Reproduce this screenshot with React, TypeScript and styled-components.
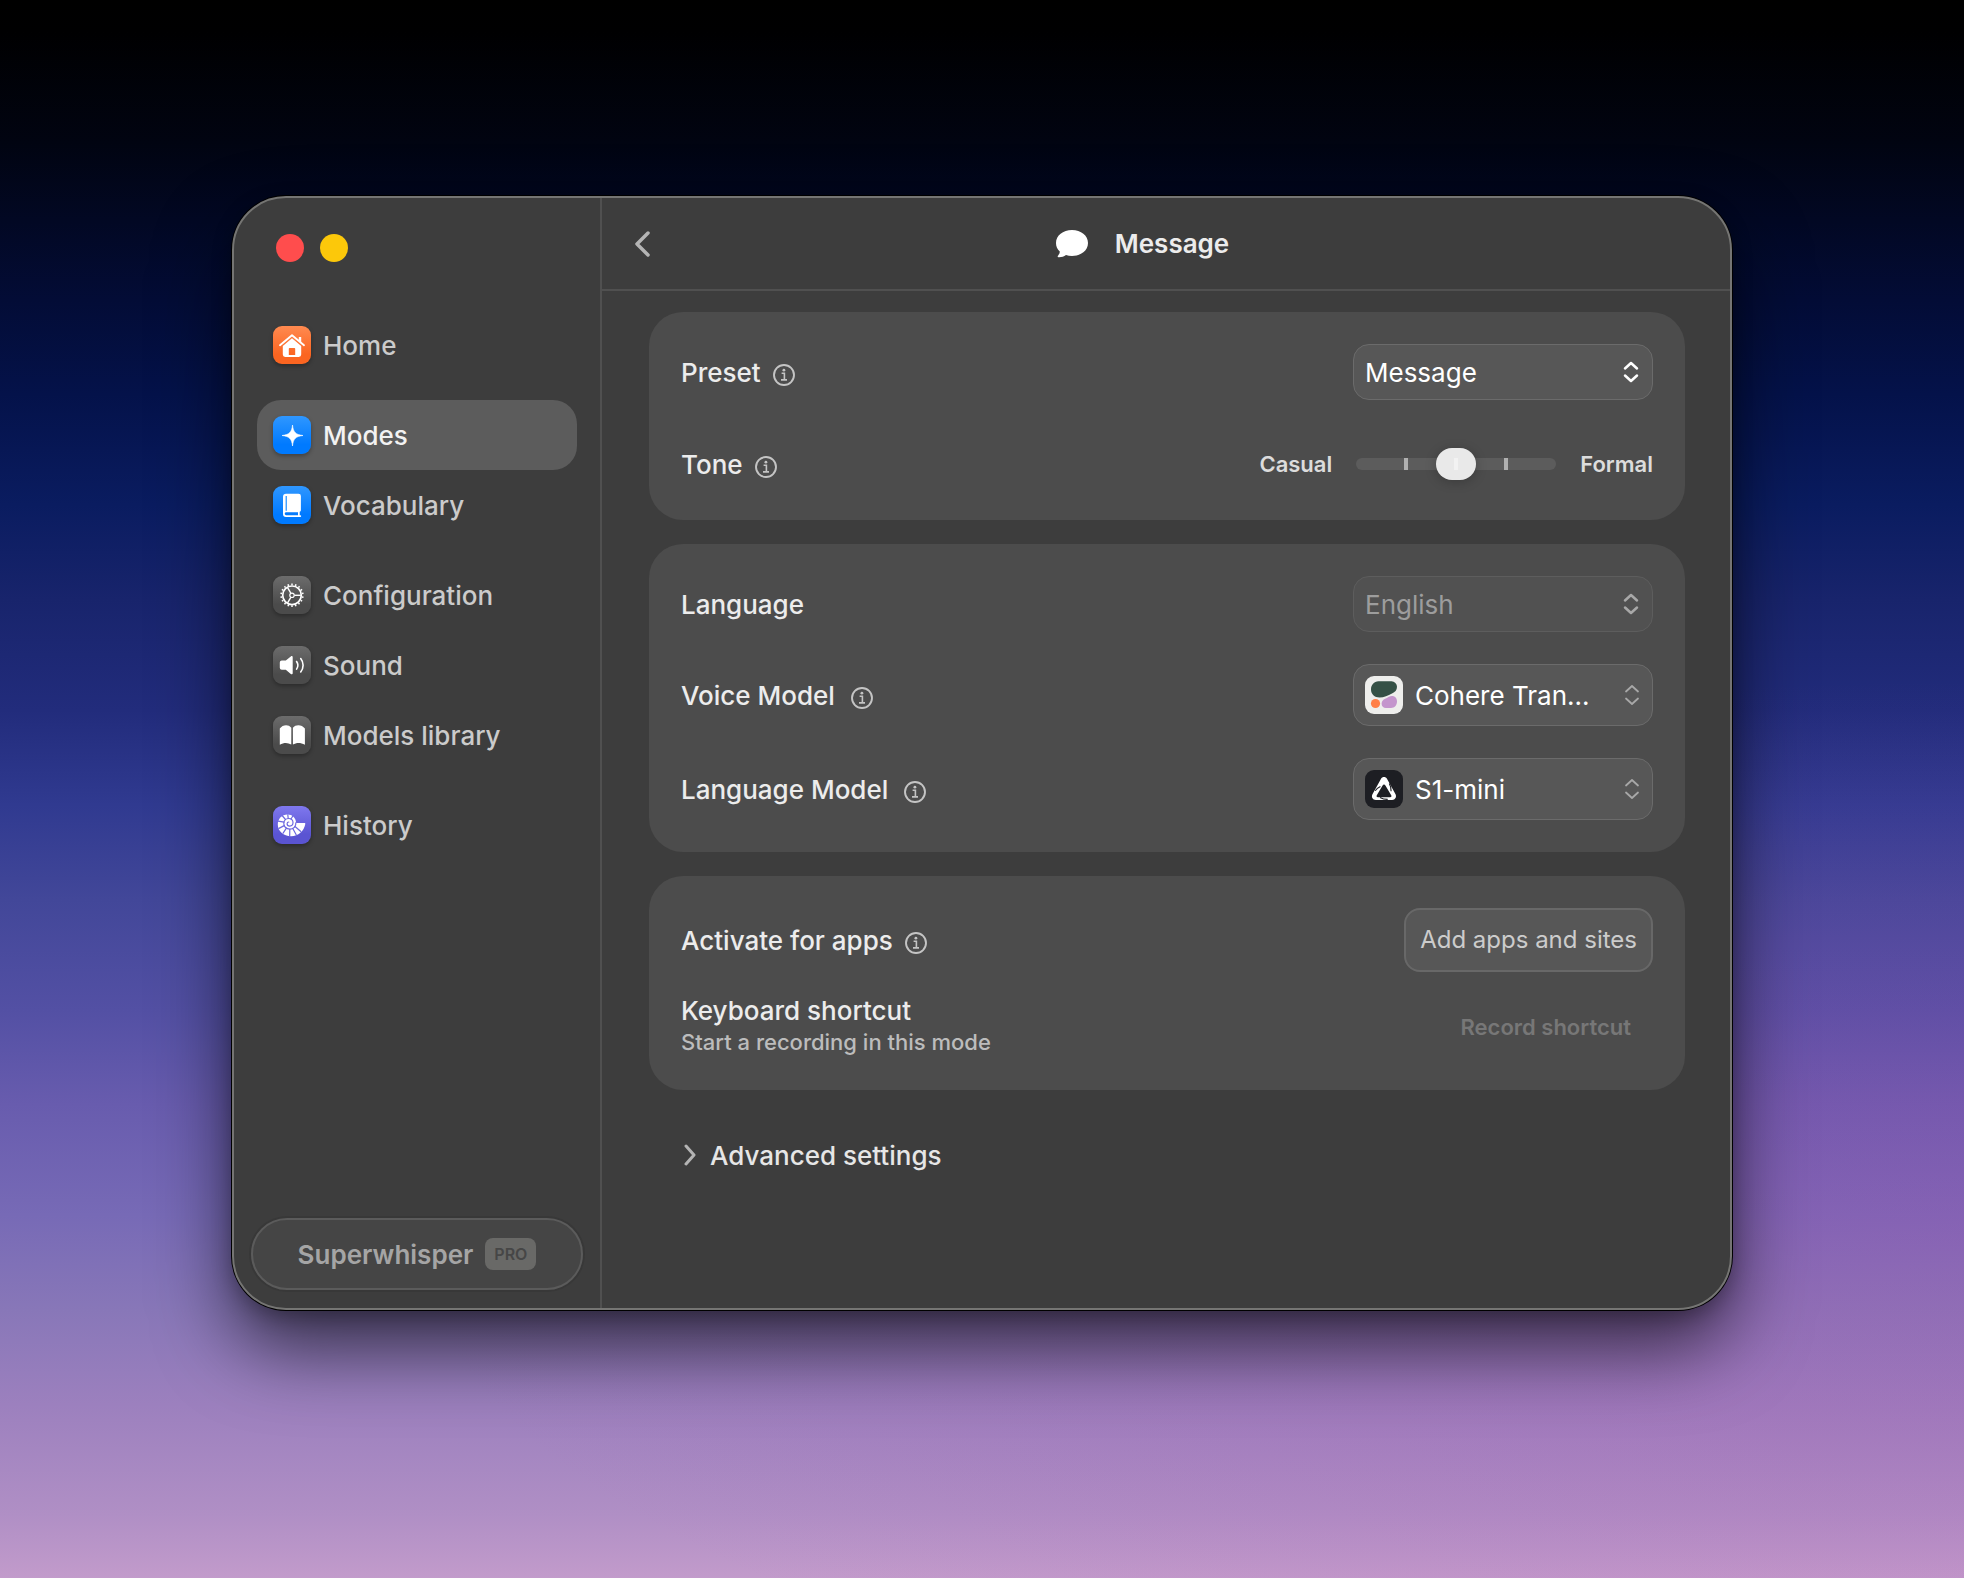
import React from "react";
import styled, { createGlobalStyle } from "styled-components";

const Global = createGlobalStyle`
  *, *::before, *::after { box-sizing: border-box; }
  body { margin: 0; background: #000; }
  button, select, input { font: inherit; color: inherit; margin: 0; }
`;

const sans = `Inter, "Liberation Sans", sans-serif`;

const Desktop = styled.div`
  min-height: 100vh;
  display: grid;
  grid-template-columns: minmax(0, 1500px);
  justify-content: center;
  align-items: start;
  padding: 196px 40px 0;
  font-family: ${sans};
  font-size: 26px;
  line-height: 32px;
  color: #ececec;
  background:
    radial-gradient(ellipse 80% 35% at 100% 78%, rgba(175, 74, 174, 0.25), rgba(175, 74, 174, 0)),
    linear-gradient(
      #000000 0%,
      #000001 2%,
      #010411 9%,
      #030c36 19%,
      #04124a 25%,
      #0a1c60 32%,
      #18246c 38%,
      #222c7c 45%,
      #303a90 51%,
      #424799 57%,
      #5350a4 64%,
      #685cae 70%,
      #776ab6 77%,
      #8877b8 83%,
      #9c80be 89%,
      #b08fc5 96%,
      #c29bcb 100%
    );
`;

const Window = styled.main`
  display: grid;
  grid-template-columns: 368px minmax(0, 1fr);
  min-height: 1114px;
  border: 2px solid #757573;
  border-radius: 54px;
  background: #3d3d3d;
  box-shadow: 0 0 0 1px #000, 0 38px 76px rgba(0, 0, 0, 0.62), 0 6px 20px rgba(0, 0, 0, 0.25);
`;

const Sidebar = styled.aside`
  display: flex;
  flex-direction: column;
  padding: 36px 17px 18px;
  border-right: 2px solid #505050;
`;

const Lights = styled.div`
  display: flex;
  gap: 16px;
  padding: 0 25px;
  margin-bottom: 48px;
`;

const Light = styled.button<{ $color: string }>`
  width: 28px;
  height: 28px;
  padding: 0;
  border: 0;
  border-radius: 50%;
  background: ${(p) => p.$color};
`;

const Nav = styled.nav`
  display: flex;
  flex-direction: column;
  gap: 20px;
  padding: 0 6px;
`;

const NavGroup = styled.div`
  display: flex;
  flex-direction: column;
`;

const NavItem = styled.a<{ $active?: boolean }>`
  display: flex;
  align-items: center;
  gap: 12px;
  height: 70px;
  padding: 0 16px;
  border-radius: 24px;
  text-decoration: none;
  font-weight: 500;
  color: ${(p) => (p.$active ? "#f2f2f2" : "#cbcbcb")};
  background: ${(p) => (p.$active ? "#5c5c5c" : "transparent")};
`;

const Caption = styled.span`
  padding-top: 2px;
`;

const Tile = styled.span<{ $from: string; $to: string }>`
  display: grid;
  place-items: center;
  width: 38px;
  height: 38px;
  border-radius: 9px;
  background: linear-gradient(${(p) => p.$from}, ${(p) => p.$to} 75%);
  box-shadow: 0 2px 4px rgba(0, 0, 0, 0.3);
`;

const Account = styled.button`
  display: flex;
  align-items: center;
  justify-content: center;
  gap: 12px;
  height: 72px;
  margin-top: auto;
  padding: 0 16px;
  border: 2px solid #5b5b5b;
  border-radius: 36px;
  background: #454545;
  box-shadow: 0 0 0 2px #383838;
  font-weight: 600;
  color: #a5a5a5;
`;

const Badge = styled.span`
  padding: 0 9px;
  border-radius: 8px;
  background: #696967;
  color: #464646;
  font-size: 16px;
  font-weight: 600;
  line-height: 32px;
`;

const Pane = styled.section`
  display: flex;
  flex-direction: column;
  min-width: 0;
`;

const Header = styled.header`
  display: grid;
  grid-template-columns: 48px minmax(0, 1fr) 96px;
  align-items: center;
  height: 93px;
  border-bottom: 2px solid #505050;
`;

const IconButton = styled.button`
  display: flex;
  justify-content: flex-end;
  padding: 0;
  border: 0;
  background: none;
`;

const Title = styled.h1`
  display: flex;
  align-items: center;
  justify-content: center;
  gap: 26px;
  margin: 0;
  font-size: 26px;
  font-weight: 600;
`;

const Content = styled.div`
  display: flex;
  flex-direction: column;
  gap: 24px;
  padding: 21px 45px 40px 47px;
`;

const Card = styled.section<{ $gap: number }>`
  display: flex;
  flex-direction: column;
  gap: ${(p) => p.$gap}px;
  padding: 32px;
  border-radius: 34px;
  background: #4c4c4c;
`;

const Row = styled.div`
  display: flex;
  align-items: center;
  justify-content: space-between;
  min-height: 48px;
`;

const LabelBox = styled.div<{ $wide?: boolean }>`
  display: flex;
  align-items: center;
  gap: ${(p) => (p.$wide ? 16 : 12)}px;
  padding-top: 2px;
  font-weight: 500;
`;

const InfoButton = styled.button`
  display: flex;
  padding: 4px 0 0;
  border: 0;
  background: none;
`;

const Picker = styled.div<{ $disabled?: boolean; $quiet?: boolean }>`
  display: grid;
  grid-template-columns: minmax(0, 1fr);
  align-items: center;
  width: 300px;
  border-radius: 16px;
  color: ${(p) => (p.$disabled ? "#9d9d9d" : "#ffffff")};

  > * { grid-area: 1 / 1; }
  > svg { pointer-events: none; }
  > svg:last-child {
    justify-self: end;
    margin-right: ${(p) => (p.$quiet ? 13 : 14)}px;
    color: ${(p) => (p.$disabled || p.$quiet ? "#a8a8a8" : "#ffffff")};
  }
`;

const Select = styled.select<{ $icon?: boolean }>`
  appearance: none;
  width: 100%;
  height: ${(p) => (p.$icon ? 62 : 56)}px;
  padding: 2px 40px 0 ${(p) => (p.$icon ? 61 : 11)}px;
  border: 1px solid #6b6b6b;
  border-radius: 16px;
  background: #575757;
  opacity: 1;

  &:disabled {
    border-color: #5d5d5d;
    background: #515151;
  }
`;

const ModelLogo = styled.svg`
  margin-left: 12px;
`;

const ToneControl = styled.div`
  display: flex;
  align-items: center;
  gap: 24px;
  font-size: 22px;
  font-weight: 600;
  color: #dcdcdc;
`;

const Slider = styled.input`
  appearance: none;
  width: 200px;
  height: 32px;
  background: none;

  &::-webkit-slider-runnable-track {
    height: 12px;
    border-radius: 6px;
    background:
      linear-gradient(#b0b0b0, #b0b0b0) 48px 0 / 4px 12px no-repeat,
      linear-gradient(#b0b0b0, #b0b0b0) 148px 0 / 4px 12px no-repeat,
      #5c5c5c;
  }

  &::-webkit-slider-thumb {
    appearance: none;
    width: 40px;
    height: 32px;
    margin-top: -10px;
    border-radius: 16px;
    background: linear-gradient(#f2f2f2, #f2f2f2) 18px 10px / 4px 12px no-repeat, #e9e9e9;
    box-shadow: 0 2px 12px rgba(0, 0, 0, 0.22);
  }
`;

const AddButton = styled.button`
  height: 64px;
  padding: 0 14px;
  border: 2px solid #686868;
  border-radius: 16px;
  background: #575757;
  color: #cccccc;
  font-size: 24px;
`;

const Stack = styled.div`
  display: flex;
  flex-direction: column;
  font-weight: 500;
  line-height: 30px;
`;

const Hint = styled.span`
  font-size: 22px;
  line-height: 32px;
  color: #bcbcbc;
`;

const RecordButton = styled.button`
  padding: 0 22px;
  border: 0;
  background: none;
  color: #777777;
  font-size: 22px;
  font-weight: 600;
`;

const Disclosure = styled.button`
  display: flex;
  align-items: center;
  align-self: flex-start;
  gap: 14px;
  margin-top: 24px;
  padding: 0 35px;
  border: 0;
  background: none;
  font-weight: 500;
  color: #e6e6e6;
`;

const Chevron = ({ flip, w, h, width }: { flip?: boolean; w: number; h: number; width: number }) => (
  <svg width={w} height={h} fill="none" stroke="#b4b4b4" strokeWidth={width} strokeLinecap="round" strokeLinejoin="round" aria-hidden="true">
    <path d={flip ? `M${w - 2} 2 L2 ${h / 2} L${w - 2} ${h - 2}` : `M2 2 L${w - 2} ${h / 2} L2 ${h - 2}`} />
  </svg>
);

const UpDown = ({ thin }: { thin?: boolean }) => (
  <svg width="16" height="22" viewBox="0 0 16 22" fill="none" stroke="currentColor" strokeWidth={thin ? 1.8 : 2.5} strokeLinecap="round" strokeLinejoin="round" aria-hidden="true">
    <path d="M2 7.5 8 2l6 5.5M2 14.5 8 20l6-5.500" />
  </svg>
);

const Info = ({ about }: { about: string }) => (
  <InfoButton type="button" aria-label={`About ${about}`}>
    <svg width="22" height="22" viewBox="0 0 22 22" fill="none" stroke="#c4c4c4" aria-hidden="true">
      <circle cx="11" cy="11" r="10" strokeWidth="1.9" />
      <path d="M8.6 9.3h2.8v6.4M8 15.9h6" strokeWidth="1.6" />
      <circle cx="10.9" cy="6.2" r="1.4" fill="#c4c4c4" stroke="none" />
    </svg>
  </InfoButton>
);

const HomeIcon = () => (
  <svg width="38" height="38" viewBox="0 0 38 38" aria-hidden="true">
    <path d="M7 19.2 19 9.2l12 10" fill="none" stroke="#fff" strokeWidth="1.9" strokeLinecap="round" strokeLinejoin="round" />
    <path d="M25.8 11h2.4v5.8l-2.4-2z" fill="#fff" />
    <path fillRule="evenodd" d="M19 12.2 28.2 20v8.6a2.4 2.4 0 0 1-2.4 2.4H12.2a2.4 2.4 0 0 1-2.4-2.4V20zM16.6 22a.8.8 0 0 0-.8.8V29h6.4v-6.200a.8.8 0 0 0-.8-.8z" fill="#fff" />
  </svg>
);

const SparkIcon = () => (
  <svg width="38" height="38" viewBox="0 0 38 38" aria-hidden="true">
    <path d="M19.500 9C20.200 16 22.500 18.700 30 19.500C22.500 20.300 20.200 23 19.500 30C18.800 23 16.500 20.300 9 19.500C16.500 18.700 18.800 16 19.500 9z" fill="#fff" stroke="#fff" strokeWidth=".6" strokeLinejoin="round" />
  </svg>
);

const BookIcon = () => (
  <svg width="38" height="38" viewBox="0 0 38 38" aria-hidden="true">
    <path d="M13 7.700h12.500a2.400 2.400 0 0 1 2.400 2.400v14.200a1.500 1.500 0 0 1-1.200 1.500v3.400h.6a.9.9 0 0 1 0 1.800H13a3 3 0 0 1-3-3V10.700a3 3 0 0 1 3-3z" fill="#fff" />
    <path d="M13.200 10v14.700" stroke="#0a84ff" strokeWidth="1.100" />
    <path d="M13.200 26.300h11.800v2.900H13.200a1.450 1.450 0 0 1 0-2.900z" fill="#067bfb" />
  </svg>
);

const GearIcon = () => {
  const teeth = Array.from({ length: 18 }, (_, i) => i * 20);
  return (
    <svg width="38" height="38" viewBox="-19 -19.300 38 38" fill="none" stroke="#fff" aria-hidden="true">
      <circle r="9.300" strokeWidth="1.700" />
      <circle r="2.200" strokeWidth="1.200" />
      {teeth.map((a) => (
        <path key={a} d="M10 0h1.700" strokeWidth="1.500" transform={`rotate(${a + 10})`} />
      ))}
      {[0, 120, 240].map((a) => (
        <path key={a} d="M2.400 0h6.400" strokeWidth="1.400" transform={`rotate(${a})`} />
      ))}
    </svg>
  );
};

const SoundIcon = () => (
  <svg width="38" height="38" viewBox="0 0 38 38" fill="none" aria-hidden="true">
    <path d="M8.800 14.600h4l5-4.200c.8-.7 1.900-.3 1.900.8v16c0 1.100-1.100 1.500-1.900.8l-5-4.200h-4a2 2 0 0 1-2-2v-5.200a2 2 0 0 1 2-2z" fill="#fff" />
    <path d="M23.600 15.500c1.600 2.300 1.600 5.300 0 7.600M27.700 12.600c3.200 4 3.200 9.400 0 13.400" stroke="#fff" strokeWidth="1.600" strokeLinecap="round" />
  </svg>
);

const LibraryIcon = () => (
  <svg width="38" height="38" viewBox="0 0 38 38" aria-hidden="true">
    <path d="M18.300 28.600c-3.600-2.100-7.400-2.100-11.500.2V12.600c2.800-4.200 8.800-4.500 11.500-.9zM19.900 28.600c3.600-2.100 7.700-2.100 12 .2V12.600c-2.900-4.200-9.200-4.500-12-.9z" fill="#fff" />
  </svg>
);

const ShellIcon = () => (
  <svg width="38" height="38" viewBox="0 0 38 38" fill="none" aria-hidden="true">
    <path d="M14.500 8.600c4.800 0 8.200 3.200 8.700 8.300h8.200c.7 0 1 .4.900 1-1.300 7-7 12.300-14.100 12.300C10.400 30.200 4.800 25.300 4.800 18.600c0-5.800 4.200-10 9.700-10z" fill="#fff" />
    <g stroke="#6c68df" strokeWidth="1.200" strokeLinecap="round">
      <path d="M22.800 16.900c.5 3.600-2.400 6.300-6 6.300-3.500 0-6-2.500-6-5.700 0-3 2.100-5 4.800-5 2.500 0 4.400 1.700 4.400 4.100 0 2.100-1.500 3.500-3.300 3.500-1.500 0-2.600-1-2.600-2.300 0-1.100.8-1.800 1.700-1.800" />
      <path d="M12.500 13.500 9.500 10M15.200 12.400l-.4-3.600M18 13l2-3.200M11 16.200l-5.800-1.100M11.200 19.600l-5.300 2.800M13.400 22.200l-3.300 5M16.800 23.300l-.1 6.500M19.800 22.500l3.400 6.300M22 20.500l5.800 5" />
    </g>
  </svg>
);

const BubbleIcon = () => (
  <svg width="34" height="30" viewBox="0 0 34 30" aria-hidden="true">
    <path d="M17 1C26 1 33 6.500 33 14S26 27 17 27c-2.200 0-4.200-.3-6-.9-2.200 1.600-4.900 2.400-7.500 2.200-.9-.1-1.100-1-.5-1.600 1.200-1.300 1.800-2.600 1.800-4.100C2.300 20.500 1 17.500 1 14 1 6.500 8 1 17 1z" fill="#fff" />
  </svg>
);

const CohereLogo = () => (
  <ModelLogo width="38" height="38" viewBox="0 0 38 38" aria-hidden="true">
    <rect width="38" height="38" rx="9" fill="#eeeeec" />
    <path d="M13.500 5.300h13a5.500 5.500 0 0 1 5.500 5.500c0 3.600-2 5.300-5 6.700-4 1.900-8 4-12.500 4C9.500 21.500 6 18 6 13.500s3-8.200 7.500-8.200z" fill="#355146" />
    <path d="M27 20c3 0 5 2.200 5 5.500 0 3.700-2.500 6.500-6 6.500h-5c-2.700 0-4.400-1.800-4.400-4.200 0-2.500 1.400-4 3.600-5 2.300-1 4.300-2.800 6.800-2.800z" fill="#c495cd" />
    <circle cx="10.500" cy="27.500" r="4.600" fill="#ff7f48" />
  </ModelLogo>
);

const S1Logo = () => (
  <ModelLogo width="38" height="38" viewBox="0 0 38 38" aria-hidden="true">
    <rect width="38" height="38" rx="9" fill="#1d1e23" />
    <path fillRule="evenodd" d="M15.900 8.900c1.500-2.600 4.700-2.600 6.200 0l8.300 15.200c1.600 3-.2 5.900-3.300 5.900H10.900c-3.300 0-5-2.900-3.300-5.900zM17.600 15.400c.7-1.200 2.100-1.200 2.800 0l5.800 9.800c.6 1 .1 2-1.100 2H12.900c-1.200 0-1.700-1-1.100-2z" fill="#fff" />
    <path d="M10.200 20.800c1.300-1.900 3-3.200 5.200-4.300M24.300 13.600c1.400 2.500 1.900 4.600 1.800 7.600M15 27.400c2.300 1.300 4.700 1.900 7.700 2" stroke="#1d1e23" strokeWidth="1.100" fill="none" />
  </ModelLogo>
);

const gray = ["#6c6c6c", "#4b4b4b"];
const blue = ["#2f97ff", "#007aff"];

const groups = [
  [{ label: "Home", tile: ["#ff8a50", "#fb6521"], Icon: HomeIcon }],
  [
    { label: "Modes", tile: blue, Icon: SparkIcon, active: true },
    { label: "Vocabulary", tile: blue, Icon: BookIcon },
  ],
  [
    { label: "Configuration", tile: gray, Icon: GearIcon },
    { label: "Sound", tile: gray, Icon: SoundIcon },
    { label: "Models library", tile: gray, Icon: LibraryIcon },
  ],
  [{ label: "History", tile: ["#7f78ee", "#5a54d2"], Icon: ShellIcon }],
] as { label: string; tile: string[]; Icon: React.FC; active?: boolean }[][];

export default function App() {
  return (
    <>
      <Global />
      <Desktop>
        <Window>
          <Sidebar>
            <Lights>
              <Light type="button" aria-label="Close" $color="#ff4d4d" />
              <Light type="button" aria-label="Minimize" $color="#fcc80a" />
            </Lights>
            <Nav>
              {groups.map((items) => (
                <NavGroup key={items[0].label}>
                  {items.map(({ label, tile, Icon, active }) => (
                    <NavItem key={label} href="#" $active={active} aria-current={active ? "page" : undefined}>
                      <Tile $from={tile[0]} $to={tile[1]}>
                        <Icon />
                      </Tile>
                      <Caption>{label}</Caption>
                    </NavItem>
                  ))}
                </NavGroup>
              ))}
            </Nav>
            <Account type="button">
              <Caption>Superwhisper</Caption>
              <Badge>PRO</Badge>
            </Account>
          </Sidebar>

          <Pane>
            <Header>
              <IconButton type="button" aria-label="Back">
                <Chevron flip w={15} h={26} width={3.5} />
              </IconButton>
              <Title>
                <BubbleIcon />
                Message
              </Title>
            </Header>

            <Content>
              <Card $gap={40}>
                <Row>
                  <LabelBox>
                    <label htmlFor="preset">Preset</label>
                    <Info about="Preset" />
                  </LabelBox>
                  <Picker>
                    <Select id="preset">
                      <option>Message</option>
                    </Select>
                    <UpDown />
                  </Picker>
                </Row>
                <Row>
                  <LabelBox>
                    <label htmlFor="tone">Tone</label>
                    <Info about="Tone" />
                  </LabelBox>
                  <ToneControl>
                    <span>Casual</span>
                    <Slider id="tone" type="range" min={0} max={4} step={1} defaultValue={2} />
                    <span>Formal</span>
                  </ToneControl>
                </Row>
              </Card>

              <Card $gap={32}>
                <Row>
                  <LabelBox>
                    <label htmlFor="language">Language</label>
                  </LabelBox>
                  <Picker $disabled>
                    <Select id="language" disabled>
                      <option>English</option>
                    </Select>
                    <UpDown />
                  </Picker>
                </Row>
                <Row>
                  <LabelBox $wide>
                    <label htmlFor="voice">Voice Model</label>
                    <Info about="Voice Model" />
                  </LabelBox>
                  <Picker $quiet>
                    <Select id="voice" $icon>
                      <option>Cohere Tran...</option>
                    </Select>
                    <CohereLogo />
                    <UpDown thin />
                  </Picker>
                </Row>
                <Row>
                  <LabelBox $wide>
                    <label htmlFor="llm">Language Model</label>
                    <Info about="Language Model" />
                  </LabelBox>
                  <Picker $quiet>
                    <Select id="llm" $icon>
                      <option>S1-mini</option>
                    </Select>
                    <S1Logo />
                    <UpDown thin />
                  </Picker>
                </Row>
              </Card>

              <Card $gap={24}>
                <Row>
                  <LabelBox>
                    <span>Activate for apps</span>
                    <Info about="Activate for apps" />
                  </LabelBox>
                  <AddButton type="button">Add apps and sites</AddButton>
                </Row>
                <Row>
                  <Stack>
                    <span>Keyboard shortcut</span>
                    <Hint>Start a recording in this mode</Hint>
                  </Stack>
                  <RecordButton type="button">Record shortcut</RecordButton>
                </Row>
              </Card>

              <Disclosure type="button" aria-expanded={false}>
                <Chevron w={12} h={22} width={3} />
                <Caption>Advanced settings</Caption>
              </Disclosure>
            </Content>
          </Pane>
        </Window>
      </Desktop>
    </>
  );
}
